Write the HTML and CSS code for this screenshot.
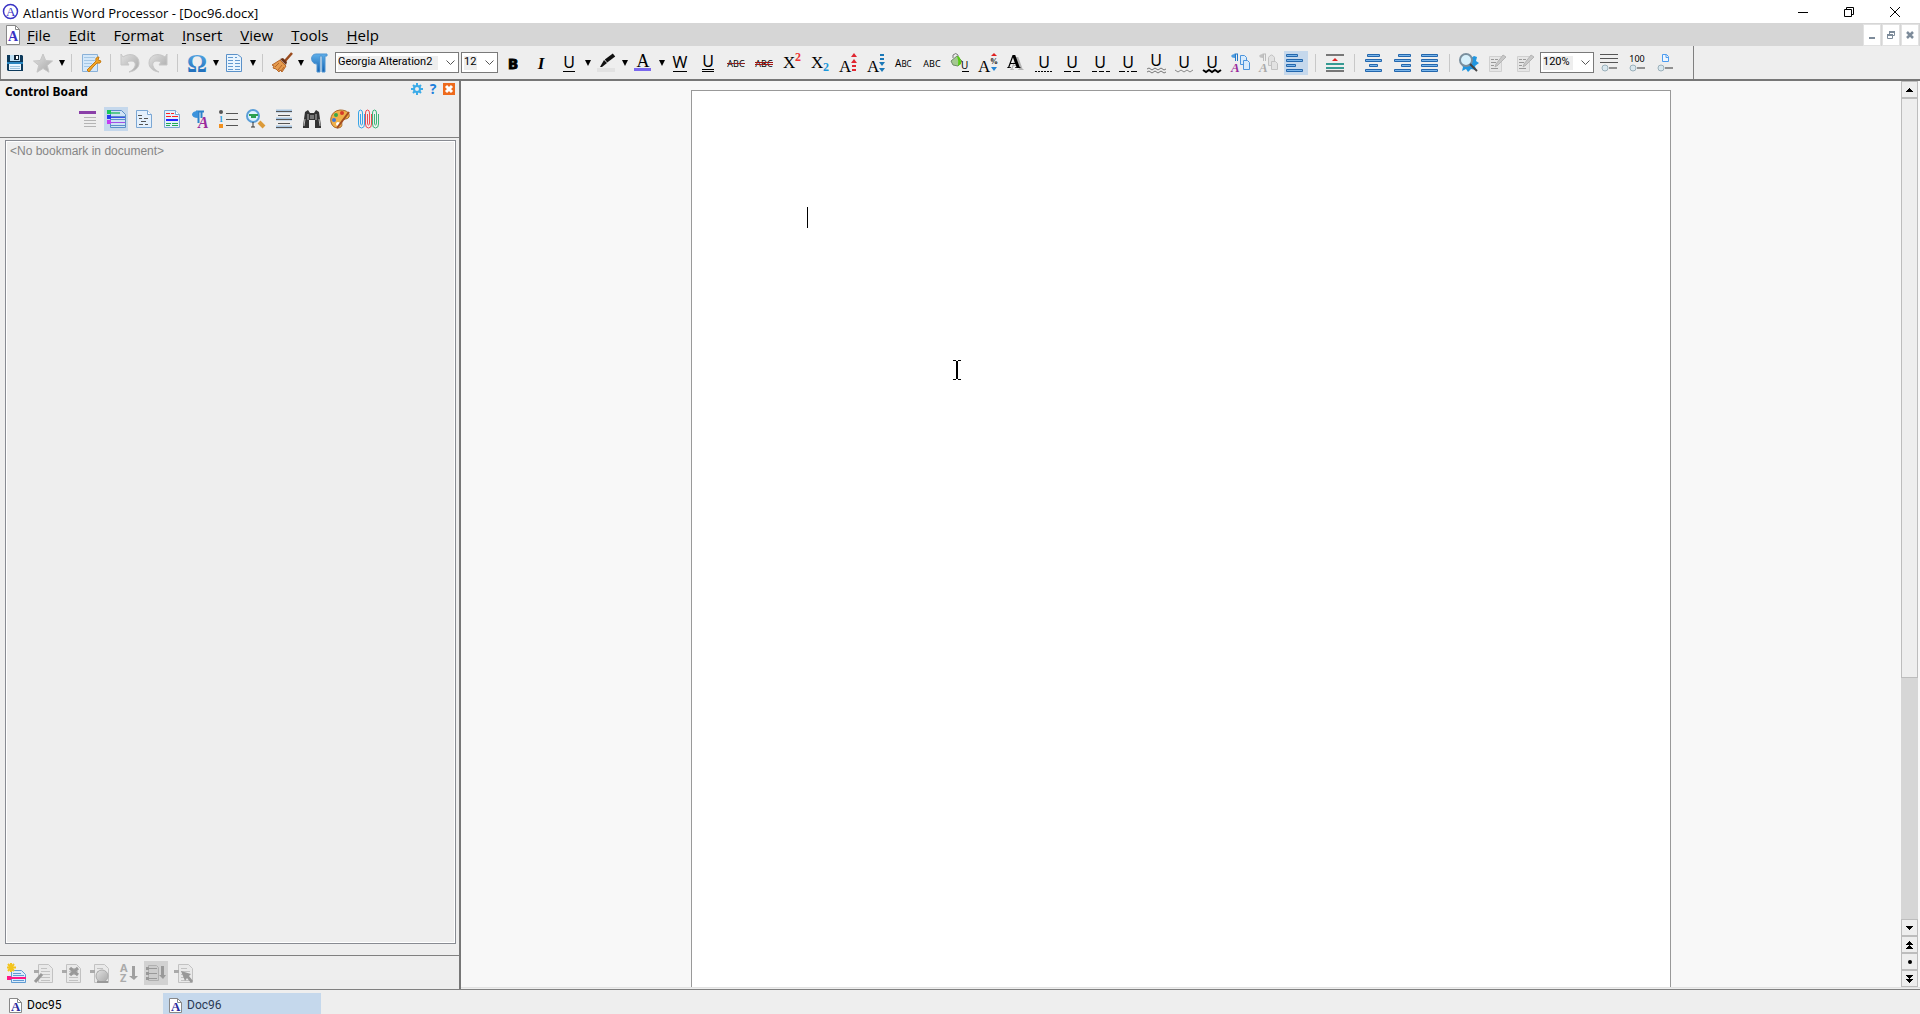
FILE: index.html
```html
<!DOCTYPE html>
<html lang="en">
<head>
<meta charset="utf-8">
<title>Atlantis Word Processor - [Doc96.docx]</title>
<link rel="stylesheet" href="styles.css">
</head>
<body>
<svg class="defs" aria-hidden="true">
  <defs>
    <linearGradient id="blue" x1="0" y1="0" x2="0" y2="1"><stop offset="0" stop-color="#5fb0ea"/><stop offset="1" stop-color="#1260b0"/></linearGradient>
    <linearGradient id="silver" x1="0" y1="0" x2="1" y2="1"><stop offset="0" stop-color="#e2e2e2"/><stop offset="1" stop-color="#a8a8a8"/></linearGradient>
    <symbol id="doc-a" viewBox="0 0 15 17">
      <path d="M1.500 1.500h8l4 4v10h-12z" fill="#fff" stroke="#888"/><path d="M9.500 1.500v4h4" fill="none" stroke="#888"/>
      <text x="3" y="14" class="g-serif g-bold g-navy" font-size="13">A</text>
    </symbol>
    <symbol id="sheet" viewBox="0 0 24 24">
      <path d="M4.500 3.500h11l4 4v13h-15z" fill="#e4f0fc" stroke="#7ba7d4"/><path d="M15.500 3.500v4h4" fill="#fff" stroke="#7ba7d4"/>
    </symbol>
    <symbol id="gray-sheet" viewBox="0 0 24 24">
      <path d="M6.500 3.500h10l4 4v14h-14z" fill="#e9e9e9" stroke="#c2c2c2"/><path d="M9 7.500h6M9 10.500h9M9 13.500h9M9 16.500h9M9 19.500h9" stroke="#c2c2c2"/><path d="M2 9h5v3H2z" fill="#aaa"/>
    </symbol>
    <symbol id="edit-gray" viewBox="0 0 24 24">
      <path d="M4.500 5.500h12v15h-12z" fill="#e6e6e6" stroke="#d0d0d0"/><path d="M6 8.500h3M10 8.500h3M6 11.500h5M6 14.500h3M10 14.500h3M6 17.500h7" stroke="#999"/><path d="M18 4l3 2-8 8-3 2 1-3z" fill="#c8c8c8" stroke="#b4b4b4"/>
    </symbol>
    <symbol id="slider" viewBox="0 0 24 24">
      <circle cx="8" cy="17" r="3" fill="#d9e7ee" stroke="#9ab0ba"/><path d="M12 17h8" stroke="#333"/>
    </symbol>
  </defs>
</svg>

<header class="titlebar">
  <svg class="app-icon" width="17" height="17" viewBox="0 0 17 17"><circle cx="8.500" cy="8.500" r="7" fill="#fff" stroke="#3a33c4" stroke-width="1.500"/><text x="4" y="13" class="g-serif g-blue" font-size="13">A</text></svg>
  <h1 class="title">Atlantis Word Processor - [Doc96.docx]</h1>
  <div class="window-buttons">
    <button class="win-btn" aria-label="Minimize"><svg width="10" height="10"><path d="M0 5.500h10" stroke="#000"/></svg></button>
    <button class="win-btn" aria-label="Restore"><svg width="10" height="10" viewBox="0 0 10 10"><path d="M.5 2.500h7v7h-7zM2.500 2.500v-2h7v7h-2" fill="none" stroke="#000"/></svg></button>
    <button class="win-btn" aria-label="Close"><svg width="10" height="10"><path d="M0 0l10 10M10 0L0 10" stroke="#000"/></svg></button>
  </div>
</header>

<nav class="menubar">
  <svg class="doc-icon" width="15" height="20" viewBox="0 0 15 20"><path d="M.5.5h9l4 4v15H.5z" fill="#fff" stroke="#888"/><path d="M9.500.5v4h4" fill="none" stroke="#888"/><text x="2" y="16" class="g-serif g-bold g-blue" font-size="14">A</text></svg>
  <button class="menu"><u>F</u>ile</button>
  <button class="menu"><u>E</u>dit</button>
  <button class="menu">F<u>o</u>rmat</button>
  <button class="menu"><u>I</u>nsert</button>
  <button class="menu"><u>V</u>iew</button>
  <button class="menu"><u>T</u>ools</button>
  <button class="menu"><u>H</u>elp</button>
  <div class="mdi-buttons">
    <button class="mdi-btn" aria-label="Minimize document"><svg width="10" height="10"><path d="M2 8h6" stroke="#7d8b9a" stroke-width="2"/></svg></button>
    <button class="mdi-btn" aria-label="Restore document"><svg width="10" height="10" viewBox="0 0 10 10"><path d="M1.500 5.500h5v3h-5zM3.500 4V2.500h5v3H7" fill="none" stroke="#7d8b9a"/><path d="M1 5h6M3 2h6" stroke="#7d8b9a" stroke-width="2"/></svg></button>
    <button class="mdi-btn" aria-label="Close document"><svg width="10" height="10"><path d="M2 2l6 6M8 2L2 8" stroke="#7d8b9a" stroke-width="2.500"/></svg></button>
  </div>
</nav>

<div class="toolbar-row">
<div class="toolbar" role="toolbar" aria-label="Formatting">
  <button class="tool" aria-label="Save"><svg viewBox="0 0 24 24"><path d="M4 4h15l1 1v15H5l-1-1z" fill="#0d3a5c"/><path d="M7 4h10v6H7z" fill="#bfe0f4"/><path d="M11 4h5v5h-5z" fill="#123"/><path d="M13 5h2v3h-2z" fill="#fff"/><path d="M6 12h12v7H6z" fill="#e8f5ff"/><path d="M4 11h16v2H4z" fill="#2a86c0"/><path d="M7 15.500h10M7 17.500h10" stroke="#9cc3dd"/></svg></button>
  <button class="tool" aria-label="Favorites"><svg viewBox="0 0 24 24"><path d="M12 3l2.700 6.500 6.800.5-5.200 4.400 1.700 6.800-6-3.700-6 3.700 1.700-6.800L2.500 10l6.800-.5z" fill="url(#silver)" stroke="#c6c6c6"/></svg></button>
  <button class="drop" aria-label="Favorites list"></button>
  <span class="sep"></span>
  <button class="tool" aria-label="Page setup"><svg viewBox="0 0 24 24"><path d="M3.500 3.500h15v17h-15z" fill="#d4e8fa" stroke="#8ab1d8"/><path d="M5 6.500h11M5 9.500h11M5 12.500h8M5 15.500h6" stroke="#a5c8e6"/><path d="M8 19l5-5 4-4q-1-4 3-4l-1 3 3 1q0 3-4 2l-4 4-4 5z" fill="#f2a526" stroke="#c67b12"/></svg></button>
  <span class="sep"></span>
  <button class="tool" aria-label="Undo"><svg viewBox="0 0 24 24"><path d="M3 3l2 3c7-5 16-2 16 6 0 4-3 8-10 9 8-4 8-11 2-11-2 0-3 1-4 1l2 3H3z" fill="url(#silver)" stroke="#c6c6c6"/></svg></button>
  <button class="tool" aria-label="Redo"><svg viewBox="0 0 24 24"><path d="M21 3l-2 3C12 1 3 4 3 12c0 4 3 8 10 9-8-4-8-11-2-11 2 0 3 1 4 1l-2 3h8z" fill="url(#silver)" stroke="#c6c6c6"/></svg></button>
  <span class="sep"></span>
  <button class="tool" aria-label="Symbol"><svg viewBox="0 0 24 24"><text x="12" y="21" class="g-mid g-serif g-bold g-omega" font-size="25">Ω</text></svg></button>
  <button class="drop" aria-label="Symbol list"></button>
  <button class="tool" aria-label="Columns"><svg viewBox="0 0 24 24"><path d="M4.500 3.500h11l4 3v14h-15z" fill="#e8f4fe" stroke="#5b91c8"/><path d="M6 6.500h5M6 9.500h5M6 12.500h5M6 15.500h5M6 18.500h5M13 6.500h2M13 9.500h5M13 12.500h5M13 15.500h5M13 18.500h5" stroke="#6299cf"/></svg></button>
  <button class="drop" aria-label="Columns list"></button>
  <span class="sep"></span>
  <button class="tool" aria-label="Format brush"><svg viewBox="0 0 24 24"><path d="M22 2l-7 8" stroke="#9a4a1c" stroke-width="2.500"/><path d="M10 9l6 6-4 6-2-2-1 2-3-3-3-1 1-2-2-1z" fill="#e59a4c" stroke="#b6672a"/><path d="M10 8l6 6 1-3-4-4z" fill="#6b3317"/><path d="M9 12l-4 4M12 14l-4 5M14 16l-3 4" stroke="#b6672a"/></svg></button>
  <button class="drop" aria-label="Brush list"></button>
  <button class="tool" aria-label="Show marks"><svg viewBox="0 0 24 24"><path d="M9 3h11v2h-2v16h-3V5h-2v16h-3v-8C3 13 3 3 9 3z" fill="url(#blue)" stroke="#4d94d2"/></svg></button>
  <div class="combo combo-font"><select class="combo-select" aria-label="Font"><option>Georgia Alteration2</option></select><svg class="chevron" width="9" height="6"><path d="M.5.5l4 4 4-4" fill="none" stroke="#555"/></svg></div>
  <div class="combo combo-size"><select class="combo-select" aria-label="Font size"><option>12</option></select><svg class="chevron" width="9" height="6"><path d="M.5.5l4 4 4-4" fill="none" stroke="#555"/></svg></div>
  <button class="tool" aria-label="Bold"><svg viewBox="0 0 24 24"><text x="12" y="18" class="g-mid g-bold g-heavy" font-size="15">B</text></svg></button>
  <button class="tool" aria-label="Italic"><svg viewBox="0 0 24 24"><text x="12" y="18" class="g-mid g-serif g-italic g-bold" font-size="17">I</text></svg></button>
  <button class="tool" aria-label="Underline"><svg viewBox="0 0 24 24"><text x="12" y="17" class="g-mid" font-size="16">U</text><path d="M6 20.500h12" stroke="#000"/></svg></button>
  <button class="drop" aria-label="Underline styles"></button>
  <button class="tool" aria-label="Highlight"><svg viewBox="0 0 24 24"><path d="M3 17h18v4H3z" fill="#e2e2e2"/><path d="M10 9l3 3-5 4H6z" fill="#111"/><path d="M12 10l8-6" stroke="#111" stroke-width="4"/></svg></button>
  <button class="drop" aria-label="Highlight colors"></button>
  <button class="tool" aria-label="Font color"><svg viewBox="0 0 24 24"><text x="12" y="16" class="g-mid g-serif" font-size="18">A</text><path d="M3 17h17v3H3z" fill="#7a68ee"/></svg></button>
  <button class="drop" aria-label="Font colors"></button>
  <button class="tool" aria-label="Word underline"><svg viewBox="0 0 24 24"><text x="12" y="17" class="g-mid" font-size="16">W</text><path d="M5 20.500h14" stroke="#000"/></svg></button>
  <button class="tool" aria-label="Double underline"><svg viewBox="0 0 24 24"><text x="12" y="16" class="g-mid" font-size="16">U</text><path d="M6 18.500h12M6 20.500h12" stroke="#000"/></svg></button>
  <button class="tool" aria-label="Strikethrough"><svg viewBox="0 0 24 24"><text x="12" y="16" class="g-mid" font-size="9">ABC</text><path d="M3 12.500h18" stroke="#8f2020"/></svg></button>
  <button class="tool" aria-label="Double strikethrough"><svg viewBox="0 0 24 24"><text x="12" y="16" class="g-mid" font-size="9">ABC</text><path d="M3 11.500h18M3 13.500h18" stroke="#a01414"/></svg></button>
  <button class="tool" aria-label="Superscript"><svg viewBox="0 0 24 24"><text x="3" y="17" class="g-serif" font-size="17">X</text><text x="15" y="10" class="g-serif g-bold g-red" font-size="12">2</text></svg></button>
  <button class="tool" aria-label="Subscript"><svg viewBox="0 0 24 24"><text x="3" y="17" class="g-serif" font-size="17">X</text><text x="15" y="20" class="g-serif g-bold g-cyan" font-size="12">2</text></svg></button>
  <button class="tool" aria-label="Grow font"><svg viewBox="0 0 24 24"><text x="3" y="21" class="g-serif" font-size="17">A</text><path d="M15 6l3-4 3 4zM15 12l3-4 3 4zM16 14h4v2h-4zM16 18h4v2h-4z" fill="#df2630"/></svg></button>
  <button class="tool" aria-label="Shrink font"><svg viewBox="0 0 24 24"><text x="3" y="21" class="g-serif" font-size="17">A</text><path d="M16 3h4v2h-4zM16 7h4v2h-4zM15 11l3 4 3-4zM15 17l3 4 3-4z" fill="#1a78b8"/></svg></button>
  <button class="tool" aria-label="Small caps"><svg viewBox="0 0 24 24"><text x="3" y="16" font-size="10">A<tspan font-size="8">BC</tspan></text></svg></button>
  <button class="tool" aria-label="All caps"><svg viewBox="0 0 24 24"><text x="12" y="16" class="g-mid" font-size="9">ABC</text></svg></button>
  <button class="tool" aria-label="Underline color"><svg viewBox="0 0 24 24"><path d="M5 7V4q3-3 5 0v5" fill="none" stroke="#777"/><path d="M3 10l6-5 5 5-4 5-5-1z" fill="#a4c890" stroke="#6f8a68"/><path d="M9 5q4 0 4 8l-3 2q1-5-1-10z" fill="#57cc14"/><text x="13" y="18" font-size="10">U</text><path d="M14 20.500h7" stroke="#000"/></svg></button>
  <button class="tool" aria-label="Character scale"><svg viewBox="0 0 24 24"><text x="2" y="21" class="g-serif" font-size="17">A</text><text x="14" y="13" class="g-serif g-bold" font-size="8">%</text><path d="M15 5l3-3 3 3z" fill="#e02020"/><path d="M15 16h6l-3 4z" fill="#2484d4"/></svg></button>
  <button class="tool" aria-label="Shadow"><svg viewBox="0 0 24 24"><text x="3" y="17" class="g-serif g-bold g-shadow" font-size="19">A</text></svg></button>
  <button class="tool" aria-label="Dotted underline"><svg viewBox="0 0 24 24"><text x="12" y="17" class="g-mid" font-size="16">U</text><path d="M3 20.500h18" stroke="#000" stroke-dasharray="2 1"/></svg></button>
  <button class="tool" aria-label="Long dash underline"><svg viewBox="0 0 24 24"><text x="12" y="17" class="g-mid" font-size="16">U</text><path d="M4 20.500h16" stroke="#000" stroke-dasharray="7 2"/></svg></button>
  <button class="tool" aria-label="Dash underline"><svg viewBox="0 0 24 24"><text x="12" y="17" class="g-mid" font-size="16">U</text><path d="M4 20.500h18" stroke="#000" stroke-dasharray="5 2"/></svg></button>
  <button class="tool" aria-label="Dash dot underline"><svg viewBox="0 0 24 24"><text x="12" y="17" class="g-mid" font-size="16">U</text><path d="M3 20.500h18" stroke="#000" stroke-dasharray="6 2 2 2"/></svg></button>
  <button class="tool" aria-label="Double wave underline"><svg viewBox="0 0 24 24"><text x="12" y="15" class="g-mid" font-size="16">U</text><path d="M3 18l2-1 3 2 3-2 3 2 3-2 3 2 2-1M3 21l2-1 3 2 3-2 3 2 3-2 3 2 2-1" fill="none" stroke="#777"/></svg></button>
  <button class="tool" aria-label="Wave underline"><svg viewBox="0 0 24 24"><text x="12" y="17" class="g-mid" font-size="16">U</text><path d="M3 19l3 2 3-2 3 2 3-2 3 2 3-2" fill="none" stroke="#888"/></svg></button>
  <button class="tool" aria-label="Heavy wave underline"><svg viewBox="0 0 24 24"><text x="12" y="17" class="g-mid" font-size="16">U</text><path d="M3 19l3 2 3-2 3 2 3-2 3 2 3-2" fill="none" stroke="#000" stroke-width="2"/></svg></button>
  <button class="tool" aria-label="Copy format"><svg viewBox="0 0 24 24"><path d="M6.500 3H10M9.500 3v7M7.500 3v7" stroke="#2478c8"/><path d="M7 3v4C2 7 2 3 7 3z" fill="#4c9ce0"/><text x="3" y="21" class="g-serif g-bold g-italic g-purple" font-size="13">A</text><path d="M12.500 4.500h4l2 2v7h-6z" fill="#d8ebfc" stroke="#4c94dc"/><path d="M15.500 9.500h4l2 2v7h-6z" fill="#d8ebfc" stroke="#4c94dc"/></svg></button>
  <button class="tool" aria-label="Paste format"><svg viewBox="0 0 24 24"><path d="M6.500 3H10M9.500 3v7M7.500 3v7" stroke="#bbb"/><path d="M7 3v4C2 7 2 3 7 3z" fill="#c2c2c2"/><text x="3" y="21" class="g-serif g-bold g-italic g-gray" font-size="13">A</text><path d="M12.500 6.500q3-5 6 0v8h-6z" fill="#e2e2e2" stroke="#c2c2c2"/><path d="M15.500 10.500h4l2 2v6h-6z" fill="#e2e2e2" stroke="#c2c2c2"/></svg></button>
  <button class="tool is-on" aria-label="Align left" aria-pressed="true"><svg viewBox="0 0 24 24" class="align"><path d="M2.500 3.500h11v2h-11zM2.500 8.500h16v2h-16zM2.500 13.500h9v2h-9zM2.500 18.500h16v2h-16z"/></svg></button>
  <span class="sep"></span>
  <button class="tool" aria-label="Paragraph spacing"><svg viewBox="0 0 24 24"><path d="M3 4h18M3 20h18" stroke="#777" stroke-width="2"/><path d="M9 10l3-3 3 3z" fill="#d22"/><path d="M3 13h18M3 17h18" stroke="#369a92" stroke-width="2"/></svg></button>
  <span class="sep"></span>
  <button class="tool" aria-label="Center"><svg viewBox="0 0 24 24" class="align"><path d="M5.500 3.500h12v2h-12zM3.500 8.500h16v2h-16zM7.500 13.500h8v2h-8zM3.500 18.500h16v2h-16z"/></svg></button>
  <button class="tool" aria-label="Align right"><svg viewBox="0 0 24 24" class="align"><path d="M8.500 3.500h12v2h-12zM4.500 8.500h16v2h-16zM11.500 13.500h9v2h-9zM4.500 18.500h16v2h-16z"/></svg></button>
  <button class="tool" aria-label="Justify"><svg viewBox="0 0 24 24" class="align"><path d="M3.500 3.500h16v2h-16zM3.500 8.500h16v2h-16zM3.500 13.500h16v2h-16zM3.500 18.500h16v2h-16z"/></svg></button>
  <span class="sep"></span>
  <button class="tool" aria-label="Find"><svg viewBox="0 0 24 24"><path d="M4 13l4-2 9-6 3 1-1 4 3 2-4 3 1 4-5-1-3 3-2-3-4 2 1-4z" fill="#2196e0"/><circle cx="9" cy="9" r="6" fill="#d7f0fb" stroke="#7a8f9e" stroke-width="2"/><path d="M13 13l7 7" stroke="#444" stroke-width="2"/></svg></button>
  <button class="tool" aria-label="Edit list"><svg viewBox="0 0 24 24"><use href="#edit-gray"/></svg></button>
  <button class="tool" aria-label="Edit page"><svg viewBox="0 0 24 24"><use href="#edit-gray"/></svg></button>
  <div class="combo combo-zoom"><select class="combo-select" aria-label="Zoom"><option>120%</option></select><svg class="chevron" width="9" height="6"><path d="M.5.5l4 4 4-4" fill="none" stroke="#555"/></svg></div>
  <button class="tool" aria-label="Fit text width"><svg viewBox="0 0 24 24"><path d="M3 3.500h18M3 7.500h18M3 11.500h18" stroke="#555"/><use href="#slider"/></svg></button>
  <button class="tool" aria-label="Zoom 100"><svg viewBox="0 0 24 24"><text x="12" y="11" class="g-mid" font-size="9">100</text><use href="#slider"/></svg></button>
  <button class="tool" aria-label="Fit page"><svg viewBox="0 0 24 24"><path d="M9.500 3.500h4l2 2v5h-6zM13 3.500v3h3" fill="#eef6ff" stroke="#4c9cf0"/><use href="#slider"/></svg></button>
</div>
</div>

<main class="workspace">
  <aside class="board">
    <div class="board-head">
      <h2 class="board-title">Control Board</h2>
      <button class="mini" aria-label="Options"><svg width="12" height="12" viewBox="0 0 12 12"><path d="M6 0v12M0 6h12M2 2l8 8M10 2l-8 8" stroke="#3cabe8" stroke-width="2"/><circle cx="6" cy="6" r="3" fill="#eee" stroke="#3cabe8" stroke-width="2"/></svg></button>
      <button class="mini mini-help" aria-label="Help">?</button>
      <button class="mini" aria-label="Close board"><svg width="12" height="12" viewBox="0 0 12 12"><path d="M0 0h12v12H0z" fill="#ee6a1c"/><path d="M3 3l6 6M9 3l-6 6" stroke="#fff" stroke-width="3"/></svg></button>
    </div>
    <div class="board-tools" role="toolbar" aria-label="Panels">
      <button class="tool" aria-label="Headings"><svg viewBox="0 0 24 24"><path d="M3 4h17v3H3z" fill="#8a3fa8"/><path d="M8 10.500h12M8 13.500h12M8 16.500h12M8 19.500h12" stroke="#b4b4b4"/></svg></button>
      <button class="tool is-on" aria-label="Bookmarks" aria-pressed="true"><svg viewBox="0 0 24 24"><path d="M6.500 3.500h11l4 4v13h-15z" fill="#cfe2f5" stroke="#5b8fc8"/><path d="M7 9.500h14M7 12.500h14M7 18.500h14" stroke="#5b8fc8"/><path d="M3 3h4v4H3z" fill="#19c85a"/><path d="M3 8h4v4H3z" fill="#2a3cf0"/><path d="M3 13h4v4H3z" fill="#c43cf0"/><path d="M7 6h9" stroke="#58c890" stroke-width="2"/><path d="M7 10.500h14" stroke="#3c50e8"/><path d="M7 15.500h14" stroke="#a050e8"/></svg></button>
      <button class="tool" aria-label="Sections"><svg viewBox="0 0 24 24"><use href="#sheet"/><path d="M6 8.500h4M7 11.500h3M12 11.500h4M9 14.500h5M7 17.500h4M13 17.500h3" stroke="#555"/></svg></button>
      <button class="tool" aria-label="Fields"><svg viewBox="0 0 24 24"><use href="#sheet"/><path d="M6 6.500h4M11 6.500h3M6 9.500h5M12 9.500h6" stroke="#f22"/><path d="M6 13h12" stroke="#22f" stroke-width="2"/><path d="M6 16.500h5M12 16.500h6M6 18.500h4M12 18.500h6" stroke="#2a5"/></svg></button>
      <button class="tool" aria-label="Styles"><svg viewBox="0 0 24 24"><path d="M8 4.500h8M10.500 4v12M13.500 4v7" stroke="#2c83cc" stroke-width="2"/><path d="M10 4v7C2 11 2 4 10 4z" fill="#3c93dc"/><text x="10" y="21" class="g-serif g-bold g-italic g-purple" font-size="16">A</text></svg></button>
      <button class="tool" aria-label="Lists"><svg viewBox="0 0 24 24"><circle cx="5" cy="5" r="2" fill="#555"/><text x="3" y="15" class="g-serif g-bold g-cyan" font-size="8">1</text><path d="M3 17h4v4H3z" fill="#f09020"/><path d="M10 6.500h12M10 12.500h12M10 18.500h12" stroke="#555"/></svg></button>
      <button class="tool" aria-label="Search"><svg viewBox="0 0 24 24"><path d="M15 15l5 5" stroke="#dc9a38" stroke-width="4"/><circle cx="9" cy="9" r="6" fill="#dcf2ff" stroke="#5a9ed8" stroke-width="2"/><path d="M5 8h9M7 10h5" stroke="#2ca050" stroke-width="2"/><path d="M9 15v5M7 20h4" stroke="#333"/></svg></button>
      <button class="tool" aria-label="Paragraphs"><svg viewBox="0 0 24 24"><path d="M4 4h16M4 12h16M4 20h16" stroke="#a8c6e2" stroke-width="3"/><path d="M4 4.500h16M6 8.500h12M4 12.500h16M6 16.500h12M4 20.500h16" stroke="#555"/></svg></button>
      <button class="tool" aria-label="Find text"><svg viewBox="0 0 24 24"><path d="M5 5l3-2 2 3h4l2-3 3 2 2 14v2h-6v-8h-6v8H3v-2z" fill="#333"/><path d="M5 12l-1 7M8 7v6M16 7v6M19 12l1 7" stroke="#bbb"/><path d="M10 8h4v4h-4z" fill="#777"/></svg></button>
      <button class="tool" aria-label="Colors"><svg viewBox="0 0 24 24"><path d="M12 3c8 0 10 4 9 7s-6 1-7 4 2 6-4 7C0 21 0 4 12 3z" fill="#efb04a" stroke="#a8672a"/><circle cx="8" cy="8" r="2" fill="#37a84a"/><circle cx="14" cy="6" r="2" fill="#d63a2a"/><circle cx="6" cy="13" r="2" fill="#3f78d8"/><circle cx="10" cy="17" r="2" fill="#fff"/><path d="M21 5L9 21" stroke="#a44d20" stroke-width="2"/></svg></button>
      <button class="tool" aria-label="Clips"><svg viewBox="0 0 24 24" class="clips"><path d="M4.500 7v9q0 2 1 2t1-2V6q0-3-2-3t-2 3v11q0 4 3 4t3-4V7" stroke="#38a5e8"/><path d="M11.500 7v9q0 2 1 2t1-2V6q0-3-2-3t-2 3v11q0 4 3 4t3-4V7" stroke="#ee4a50"/><path d="M18.500 7v9q0 2 1 2t1-2V6q0-3-2-3t-2 3v11q0 4 3 4t3-4V7" stroke="#3cb878"/></svg></button>
    </div>
    <div class="board-body"><div class="board-list">&lt;No bookmark in document&gt;</div></div>
    <div class="board-foot" role="toolbar" aria-label="Bookmark actions">
      <button class="tool" aria-label="New bookmark"><svg viewBox="0 0 24 24"><path d="M7.500 9.500h10l4 4v8h-14z" fill="#dcecfb" stroke="#5f9bd2"/><path d="M9 12.500h8M9 14.500h11M9 19.500h11" stroke="#5f9bd2"/><path d="M3 15h4v1h15v2H7v1H3z" fill="#ff1684"/><path d="M7 2v9M3 6.500h9M4 3l6 7M10 3l-6 7" stroke="#f3c41d" stroke-width="2"/></svg></button>
      <button class="tool" aria-label="Rename bookmark"><svg viewBox="0 0 24 24"><use href="#gray-sheet"/><path d="M3 21l7-8" stroke="#999" stroke-width="3"/></svg></button>
      <button class="tool" aria-label="Delete bookmark"><svg viewBox="0 0 24 24"><use href="#gray-sheet"/><path d="M10 7l8 7M18 7l-8 7" stroke="#999" stroke-width="3"/></svg></button>
      <button class="tool" aria-label="Hide bookmark"><svg viewBox="0 0 24 24"><use href="#gray-sheet"/><circle cx="14" cy="15" r="6" fill="url(#silver)" stroke="#aaa"/><path d="M9 21h11" stroke="#999" stroke-width="2"/></svg></button>
      <button class="tool" aria-label="Sort by name"><svg viewBox="0 0 24 24"><text x="4" y="11" class="g-bold g-gray" font-size="11">A</text><text x="4" y="21" class="g-bold g-gray" font-size="11">Z</text><path d="M16 5h3v10h3l-4 4-5-4h3z" fill="#a0a0a0"/></svg></button>
      <button class="tool is-gray" aria-label="Sort by position" aria-pressed="true"><svg viewBox="0 0 24 24"><path d="M4.500 4.500h8l2 2v13h-10z" fill="#ccc" stroke="#b0b0b0"/><path d="M2 7.500h11M2 12.500h11M2 17.500h11" stroke="#999"/><path d="M2 6h3v3H2zM2 11h3v3H2zM2 16h3v3H2z" fill="#999"/><path d="M17 5h3v9h2l-3 4-4-4h2z" fill="#999"/></svg></button>
      <button class="tool" aria-label="Go to bookmark"><svg viewBox="0 0 24 24"><use href="#gray-sheet"/><path d="M9 10l10 3-2 2 4 5-2 2-4-5-2 3z" fill="#999"/></svg></button>
    </div>
  </aside>

  <section class="editor">
    <div class="canvas">
      <article class="page" contenteditable="true" aria-label="Document" spellcheck="false"><span class="caret"></span></article>
      <svg class="pointer" width="8" height="20" viewBox="0 0 8 20"><path d="M0 .5h3M5 .5h3M0 19.500h3M5 19.500h3" stroke="#000"/><path d="M4 1v18" stroke="#000" stroke-width="2"/></svg>
    </div>
    <div class="scrollbar">
      <button class="sb-btn" aria-label="Scroll up"><svg width="7" height="4"><path d="M3 0h1v1h1v1h1v1h1v1H0V3h1V2h1V1h1z"/></svg></button>
      <div class="sb-track"><div class="sb-thumb"></div><div class="sb-rest"></div></div>
      <button class="sb-btn" aria-label="Scroll down"><svg width="7" height="4"><path d="M0 0h7v1H6v1H5v1H4v1H3V3H2V2H1V1H0z"/></svg></button>
      <button class="sb-btn" aria-label="Previous page"><svg width="7" height="8"><path d="M3 0h1v1h1v1h1v1h1v1H0V3h1V2h1V1h1zM3 4h1v1h1v1h1v1h1v1H0V7h1V6h1V5h1z"/></svg></button>
      <button class="sb-btn" aria-label="Browse object"><svg width="4" height="4"><circle cx="2" cy="2" r="2"/></svg></button>
      <button class="sb-btn" aria-label="Next page"><svg width="7" height="8"><path d="M0 0h7v1H6v1H5v1H4v1H3V3H2V2H1V1H0zM0 4h7v1H6v1H5v1H4v1H3V7H2V6H1V5H0z"/></svg></button>
    </div>
  </section>
</main>

<footer class="tabs">
  <button class="tab"><svg width="15" height="17"><use href="#doc-a"/></svg>Doc95</button>
  <button class="tab tab-active"><svg width="15" height="17"><use href="#doc-a"/></svg>Doc96</button>
</footer>
</body>
</html>
```
FILE: styles.css
```css
* { box-sizing: border-box; }

body {
  margin: 0;
  height: 100vh;
  display: flex;
  flex-direction: column;
  overflow: hidden;
  background: #eee;
  color: #000;
  font: 12px/16px "Open Sans", "Noto Sans", sans-serif;
}

button {
  margin: 0;
  padding: 0;
  border: 0;
  background: none;
  color: inherit;
  font: inherit;
}

svg { display: block; flex: none; }
.defs { position: absolute; width: 0; height: 0; }

/* Title bar */
.titlebar {
  flex: none;
  height: 23px;
  display: flex;
  align-items: center;
  background: #fff;
  padding-left: 2px;
}
.title { margin: 2px 0 0 4px; font-size: 13px; line-height: 16px; font-weight: 400; }
.window-buttons { display: flex; margin-left: auto; margin-right: 2px; }
.win-btn { width: 46px; height: 20px; display: grid; place-items: center; }

/* Menu bar */
.menubar {
  flex: none;
  height: 23px;
  display: flex;
  align-items: center;
  background: #d6d6d6;
  font-size: 15px;
  line-height: 22px;
}
.doc-icon { margin-left: 6px; }
.menu { padding: 0 9px; }
.menu:first-of-type { padding-left: 6px; }
.menu u { text-underline-offset: 2px; }
.mdi-buttons { display: flex; gap: 1px; margin-left: auto; padding-right: 1px; }
.mdi-btn {
  width: 18px;
  height: 22px;
  display: grid;
  place-items: center;
  background: #fff;
  border: 1px solid #e2e2e2;
}

/* Formatting toolbar */
.toolbar-row { flex: none; border-bottom: 2px solid #777; }
.toolbar {
  display: flex;
  align-items: center;
  width: 1694px;
  max-width: 100%;
  height: 33px;
  border-left: 1px solid #808080;
  border-right: 1px solid #808080;
}
.tool { width: 28px; height: 24px; flex: none; display: grid; place-items: center; }
.tool svg { width: 24px; height: 24px; }
.tool.is-on svg { background: #c5d8ec; }
.tool.is-gray svg { background: #d2d2d2; }
.drop { width: 9px; height: 24px; flex: none; display: grid; place-items: center; }
.drop::before {
  content: "";
  border: 3px solid transparent;
  border-top: 6px solid #000;
  border-bottom: 0;
}
.sep { width: 11px; height: 18px; flex: none; display: flex; justify-content: center; }
.sep::before { content: ""; width: 1px; background: #c8c8c8; }
.align { fill: #79b5ea; stroke: #2467ad; }

.combo { display: grid; flex: none; height: 21px; align-items: center; margin: 0 1px; }
.combo-font { width: 124px; margin-left: 2px; }
.combo-size { width: 37px; }
.combo-zoom { width: 54px; }
.combo-select {
  grid-area: 1 / 1;
  appearance: none;
  width: 100%;
  height: 21px;
  margin: 0;
  padding: 0 0 1px 2px;
  border: 1px solid #7a7a7a;
  border-radius: 0;
  background: #fff linear-gradient(#eee, #eee) no-repeat 2px 3px / calc(100% - 22px) 14px;
  color: #000;
  font: 11px/18px Roboto, "Open Sans", sans-serif;
}
.chevron { grid-area: 1 / 1; justify-self: end; margin-right: 4px; pointer-events: none; }

/* Lettering inside icons */
.tool text { font-family: "Noto Sans", sans-serif; }
.tool text.g-serif, text.g-serif { font-family: "Liberation Serif", serif; }
.g-mid { text-anchor: middle; }
.g-bold { font-weight: 700; }
.g-italic { font-style: italic; }
.g-heavy { stroke: #000; stroke-width: 1px; }
.g-navy { fill: #2a2a9c; }
.g-blue { fill: #3a33c4; }
.g-omega { fill: url(#blue); }
.g-red { fill: #ee3030; }
.g-cyan { fill: #1c98dc; }
.g-purple { fill: #9a2c9c; }
.g-gray { fill: #aaa; }
.g-shadow { filter: drop-shadow(3px 2px 0 #b4b4b4); }
.clips { fill: none; }

/* Workspace */
.workspace { flex: 1; min-height: 0; display: flex; border-bottom: 1px solid #808080; }
.board { width: 461px; flex: none; display: flex; flex-direction: column; border-right: 2px solid #777; }
.board-head { display: flex; gap: 4px; height: 22px; padding: 0 4px 0 5px; }
.board-title { flex: 1; margin: 3px 0 0; font: 700 12px/16px "Noto Sans", "Open Sans", sans-serif; }
.mini { width: 12px; height: 16px; display: grid; place-items: center; }
.mini-help { color: #1e80dc; font-weight: 700; font-size: 14px; }
.board-tools {
  display: flex;
  justify-content: center;
  height: 35px;
  padding: 4px 4px 0 0;
  border-bottom: 1px solid #808080;
}
.board-body { flex: 1; min-height: 0; padding: 2px 3px 11px 5px; display: flex; }
.board-list {
  flex: 1;
  border: 1px solid #888b92;
  box-shadow: inset -1px -1px #fff, inset 1px 1px #fff;
  padding: 2px 4px;
  color: #858585;
  font: 12px/16px "Liberation Sans", Arial, sans-serif;
}
.board-foot { display: flex; height: 34px; padding: 5px 0 0 2px; border-top: 1px solid #808080; }

.editor { flex: 1; min-width: 0; display: flex; background: #f8f8f8; border-bottom: 1px solid #e2e2e2; margin-bottom: 1px; padding-right: 2px; }
.canvas { flex: 1; min-width: 0; position: relative; display: flex; justify-content: center; padding-top: 9px; }
.page {
  width: 980px;
  max-width: 100%;
  padding: 116px 115px 0;
  background: #fff;
  border: 1px solid #999;
  border-bottom: 0;
  outline: 0;
}
.caret { display: block; width: 1px; height: 21px; background: #000; }
.pointer { position: absolute; left: 492px; top: 279px; }

.scrollbar { width: 17px; flex: none; display: flex; flex-direction: column; }
.sb-btn { width: 17px; height: 17px; flex: none; display: grid; place-items: center; background: #eee; border: 1px solid #bdbdbd; }
.sb-track { flex: 1; display: flex; flex-direction: column; background: #d6d6d6; }
.sb-thumb { flex: 12; background: #eee; border: 1px solid #bdbdbd; }
.sb-rest { flex: 5; }

/* Document tabs */
.tabs { flex: none; display: flex; height: 24px; padding: 3px 0 0 3px; gap: 2px; }
.tab { width: 158px; display: flex; align-items: center; gap: 4px; padding: 3px 0 0 5px; font: 12px/16px Roboto, "Open Sans", sans-serif; }
.tab-active { background: #c5d8ec; color: #2b3a55; }
```
